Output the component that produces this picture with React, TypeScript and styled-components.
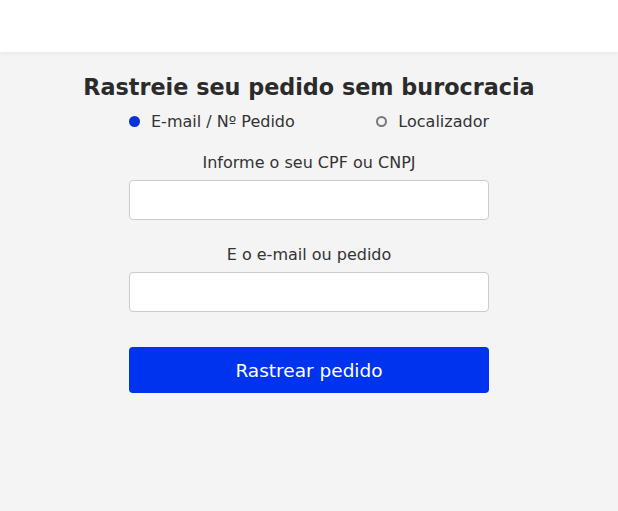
import { useState } from "react";
import styled, { createGlobalStyle } from "styled-components";

const GlobalStyle = createGlobalStyle`
   html, body {
      margin: 0;
      padding: 0;
      background: #f4f4f4;
      font-family: "DejaVu Sans", "Open Sans", sans-serif;
      color: #333333;
   }
`;

const App = () => {
   const [mode, setMode] = useState<"email" | "locator">("email");

   return (
      <>
         <GlobalStyle />
         <Page>
            <TopBar />
            <Main>
               <Title>Rastreie seu pedido sem burocracia</Title>
               <Form onSubmit={(e) => e.preventDefault()}>
                  <RadioRow>
                     <RadioOption onClick={() => setMode("email")}>
                        <RadioDot checked={mode === "email"} />
                        E-mail / Nº Pedido
                     </RadioOption>
                     <RadioOption onClick={() => setMode("locator")}>
                        <RadioDot checked={mode === "locator"} />
                        Localizador
                     </RadioOption>
                  </RadioRow>

                  <Field gap={20}>
                     <Label>Informe o seu CPF ou CNPJ</Label>
                     <Input type="text" />
                  </Field>

                  <Field gap={25}>
                     <Label>E o e-mail ou pedido</Label>
                     <Input type="text" />
                  </Field>

                  <SubmitButton type="submit">Rastrear pedido</SubmitButton>
               </Form>
            </Main>
         </Page>
      </>
   );
};
export default App;

const Page = styled.div`
   min-height: 511px;
   display: flex;
   flex-direction: column;
`;

const TopBar = styled.header`
   height: 52px;
   background: #ffffff;
   box-shadow: 0 1px 6px rgba(0, 0, 0, 0.06);
`;

const Main = styled.main`
   display: flex;
   flex-direction: column;
   align-items: center;
   padding-top: 21px;
`;

const Title = styled.h1`
   margin: 0;
   font-size: 22.3px;
   font-weight: 700;
   color: #2b2b2b;
   line-height: 28px;
   white-space: nowrap;
`;

const Form = styled.form`
   width: 360px;
   display: flex;
   flex-direction: column;
`;

const RadioRow = styled.div`
   display: flex;
   justify-content: space-between;
   margin-top: 8px;
   height: 24px;
   align-items: center;
`;

const RadioOption = styled.label`
   display: flex;
   align-items: center;
   gap: 11px;
   font-size: 16px;
   color: #333333;
   cursor: pointer;
`;

const RadioDot = styled.span<{ checked: boolean }>`
   width: 11px;
   height: 11px;
   border-radius: 50%;
   box-sizing: border-box;
   background: ${(p) => (p.checked ? "#0a32d6" : "transparent")};
   border: ${(p) => (p.checked ? "none" : "2px solid #777777")};
`;

const Field = styled.div<{ gap: number }>`
   display: flex;
   flex-direction: column;
   align-items: center;
   margin-top: ${(p) => p.gap}px;
`;

const Label = styled.span`
   font-size: 16px;
   line-height: 20px;
   color: #333333;
   margin-bottom: 7px;
`;

const Input = styled.input`
   width: 100%;
   height: 40px;
   box-sizing: border-box;
   border: 1px solid #cccccc;
   border-radius: 4px;
   background: #ffffff;
   outline: none;
`;

const SubmitButton = styled.button`
   margin-top: 35px;
   height: 46px;
   border: none;
   border-radius: 4px;
   background: #0033ee;
   color: #ffffff;
   font-family: inherit;
   font-size: 18.5px;
   cursor: pointer;
`;
